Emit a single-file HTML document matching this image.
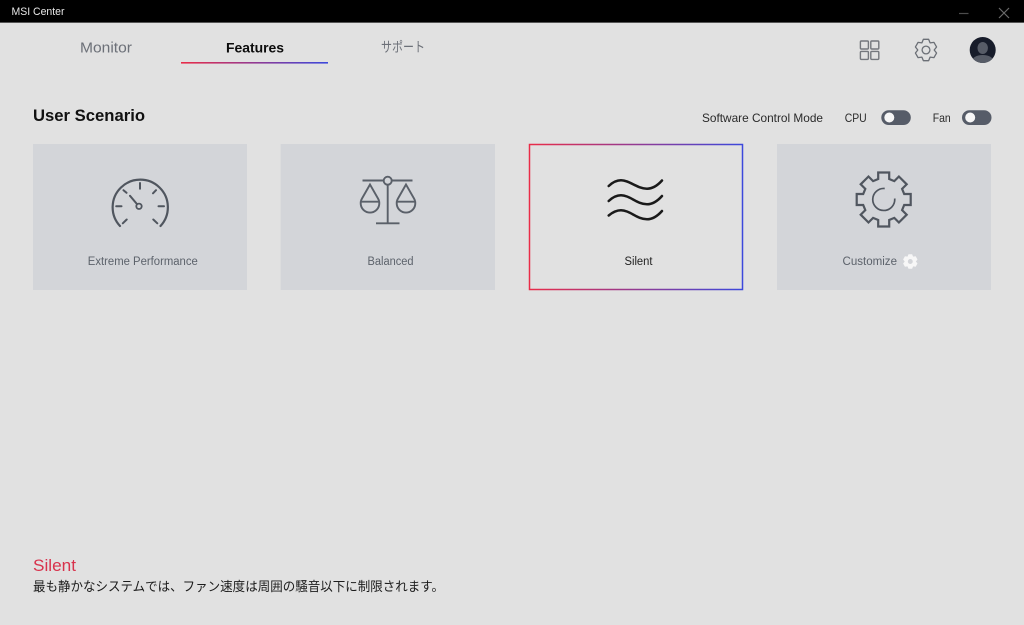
<!DOCTYPE html>
<html lang="ja">
<head>
<meta charset="utf-8">
<title>MSI Center</title>
<style>
html,body{margin:0;padding:0;width:1024px;height:625px;overflow:hidden;background:#e1e1e1}
svg{display:block;position:absolute;left:0;top:0}
text{font-family:"Liberation Sans","Noto Sans CJK JP",sans-serif}
</style>
</head>
<body>
<svg width="1024" height="625" viewBox="0 0 1024 625" xmlns="http://www.w3.org/2000/svg">
<defs>
<linearGradient id="g1" gradientUnits="userSpaceOnUse" x1="181" y1="0" x2="328" y2="0"><stop offset="0" stop-color="#ea2c48"/><stop offset="1" stop-color="#3b48dc"/></linearGradient>
<linearGradient id="g2" gradientUnits="userSpaceOnUse" x1="529" y1="0" x2="743" y2="0"><stop offset="0" stop-color="#ea2c48"/><stop offset="1" stop-color="#3b48dc"/></linearGradient>
<clipPath id="av"><circle cx="982.7" cy="50" r="13"/></clipPath>
</defs>
<rect width="1024" height="625" fill="#e1e1e1"/>

<!-- title bar -->
<rect width="1024" height="22" fill="#000"/>
<rect y="22" width="1024" height="1" fill="#555"/>
<text x="11.5" y="15" font-size="11" fill="#e8e8e8" textLength="53" lengthAdjust="spacingAndGlyphs">MSI Center</text>
<path d="M959 13.5H968.5" stroke="#4c4c4c" stroke-width="1.2" fill="none"/>
<path d="M999 8L1009 18M1009 8L999 18" stroke="#6a6a6a" stroke-width="1.2" fill="none"/>

<!-- tabs -->
<text x="80" y="52.5" font-size="14.5" fill="#6c7078" textLength="52" lengthAdjust="spacingAndGlyphs">Monitor</text>
<text x="226" y="52.5" font-size="14" font-weight="700" fill="#0c0c0c" textLength="58" lengthAdjust="spacingAndGlyphs">Features</text>
<text x="381" y="52" font-size="14" fill="#6c7078" textLength="44" lengthAdjust="spacingAndGlyphs">サポート</text>
<rect x="181" y="62" width="147" height="1.6" fill="url(#g1)"/>

<!-- top right icons -->
<g fill="none" stroke="#74777d" stroke-width="1.4">
<rect x="860.4" y="41" width="8" height="8" rx="1"/>
<rect x="870.8" y="41" width="8" height="8" rx="1"/>
<rect x="860.4" y="51.4" width="8" height="8" rx="1"/>
<rect x="870.8" y="51.4" width="8" height="8" rx="1"/>
</g>
<g transform="translate(926 50)" fill="none" stroke="#6b6f76" stroke-width="1.3" stroke-linejoin="round">
<path d="M-2.66-10.67L2.66-10.67L4.1-7.1L7.9-7.64L10.57-3.03L8.2 0L10.57 3.03L7.9 7.64L4.1 7.1L2.66 10.67L-2.66 10.67L-4.1 7.1L-7.9 7.64L-10.57 3.03L-8.2 0L-10.57-3.03L-7.9-7.64L-4.1-7.1Z"/>
<circle r="3.9"/>
</g>
<circle cx="982.7" cy="50" r="13" fill="#171c2a"/>
<g clip-path="url(#av)" fill="#575c67">
<ellipse cx="982.7" cy="48" rx="5.2" ry="6"/>
<path d="M971 64C971 58 976 55 982.7 55C989.4 55 994.5 58 994.5 64Z"/>
</g>

<!-- heading -->
<text x="33" y="121" font-size="17" font-weight="700" fill="#111" textLength="112" lengthAdjust="spacingAndGlyphs">User Scenario</text>
<text x="702" y="122" font-size="12" fill="#2a2a2a" textLength="121" lengthAdjust="spacingAndGlyphs">Software Control Mode</text>
<text x="844.7" y="122" font-size="12" fill="#2a2a2a" textLength="22" lengthAdjust="spacingAndGlyphs">CPU</text>
<text x="932.7" y="122" font-size="12" fill="#2a2a2a" textLength="18" lengthAdjust="spacingAndGlyphs">Fan</text>
<rect x="881.3" y="110.2" width="29.5" height="14.8" rx="7.4" fill="#565c68"/>
<circle cx="889.3" cy="117.5" r="5" fill="#f6f6f6"/>
<rect x="962" y="110.2" width="29.5" height="14.8" rx="7.4" fill="#565c68"/>
<circle cx="970.2" cy="117.5" r="5" fill="#f6f6f6"/>

<!-- cards -->
<rect x="33" y="144" width="214" height="146" fill="#d3d5d9"/>
<rect x="280.7" y="144" width="214.3" height="146" fill="#d3d5d9"/>
<rect x="529.5" y="144.5" width="213" height="145" fill="none" stroke="url(#g2)" stroke-width="1.5"/>
<rect x="777" y="144" width="214" height="146" fill="#d3d5d9"/>

<!-- speedometer -->
<g fill="none" stroke="#50565f" stroke-width="2" stroke-linecap="round">
<path d="M120 226A27.6 27.6 0 1 1 160.5 226" stroke-width="2.2"/>
<path d="M140 183V188.7M116.2 206.3H121.5M158.5 206.3H164M123.5 190.2L126.5 192.8M156 190.2L153 193.3M126.7 219.5L122.8 223.3M153.3 219.5L157.3 223.3M130 195.8L136.6 203.6"/>
<circle cx="139" cy="206.3" r="2.7" stroke-width="1.8"/>
</g>
<text x="87.8" y="265" font-size="11.5" fill="#5c626b" textLength="110" lengthAdjust="spacingAndGlyphs">Extreme Performance</text>

<!-- balance -->
<g fill="none" stroke="#5a6069" stroke-width="1.9">
<path d="M362.5 180.5H383.7M391.7 180.5H412.5"/>
<circle cx="387.7" cy="180.7" r="4"/>
<path d="M387.7 184.7V223.3M376 223.3H399.5"/>
<path d="M361 201.7H379M370 184.5L362 198.5A9.3 9.3 0 1 0 378 198.5Z"/>
<path d="M397 201.7H415M406 184.5L398 198.5A9.3 9.3 0 1 0 414 198.5Z"/>
</g>
<text x="367.5" y="265" font-size="11.5" fill="#5c626b" textLength="46" lengthAdjust="spacingAndGlyphs">Balanced</text>

<!-- waves -->
<g fill="none" stroke="#1a1a1a" stroke-width="2.5" stroke-linecap="round">
<path d="M608.7 186C613 182 617 180.3 621 180.3C630 180.3 637 188.7 647 188.7C653 188.7 658 185 662 180.5"/>
<path d="M608.7 201C613 197 617 195.3 621 195.3C630 195.3 637 204.3 647 204.3C653 204.3 658 200.5 662 196"/>
<path d="M608.7 215.5C613 212 617 210.3 621 210.3C630 210.3 637 219.3 647 219.3C653 219.3 658 215.5 662 211"/>
</g>
<text x="624.5" y="265" font-size="11.5" fill="#222" textLength="28" lengthAdjust="spacingAndGlyphs">Silent</text>

<!-- gear -->
<g transform="translate(883.7 199.5)" fill="none" stroke="#50565f" stroke-width="2.2" stroke-linejoin="miter">
<path d="M-5.5-27L5.5-27L5.5-20.5L10.6-18.4L15.2-23L23-15.2L18.4-10.6L20.5-5.5L27-5.5L27 5.5L20.5 5.5L18.4 10.6L23 15.2L15.2 23L10.6 18.4L5.5 20.5L5.5 27L-5.5 27L-5.5 20.5L-10.6 18.4L-15.2 23L-23 15.2L-18.4 10.6L-20.5 5.5L-27 5.5L-27-5.5L-20.5-5.5L-18.4-10.6L-23-15.2L-15.2-23L-10.6-18.4L-5.5-20.5Z"/>
<path d="M1-11A11 11 0 1 0 11-1" stroke-width="1.7"/>
</g>
<text x="842.5" y="265" font-size="11.5" fill="#5c626b" textLength="54.5" lengthAdjust="spacingAndGlyphs">Customize</text>
<g transform="translate(910.3 261.5) scale(.68)">
<path fill="#f7f7f7" fill-rule="evenodd" d="M-2.66-10.67L2.66-10.67L4.1-7.1L7.9-7.64L10.57-3.03L8.2 0L10.57 3.03L7.9 7.64L4.1 7.1L2.66 10.67L-2.66 10.67L-4.1 7.1L-7.9 7.64L-10.57 3.03L-8.2 0L-10.57-3.03L-7.9-7.64L-4.1-7.1ZM0-3.6A3.6 3.6 0 1 0 0 3.6A3.6 3.6 0 1 0 0-3.6Z"/>
</g>

<!-- footer -->
<text x="33" y="571" font-size="17" fill="#d8324c" textLength="43" lengthAdjust="spacingAndGlyphs">Silent</text>
<text x="33" y="591" font-size="13" fill="#1c1c1c" textLength="411" lengthAdjust="spacingAndGlyphs">最も静かなシステムでは、ファン速度は周囲の騒音以下に制限されます。</text>
</svg>
</body>
</html>
